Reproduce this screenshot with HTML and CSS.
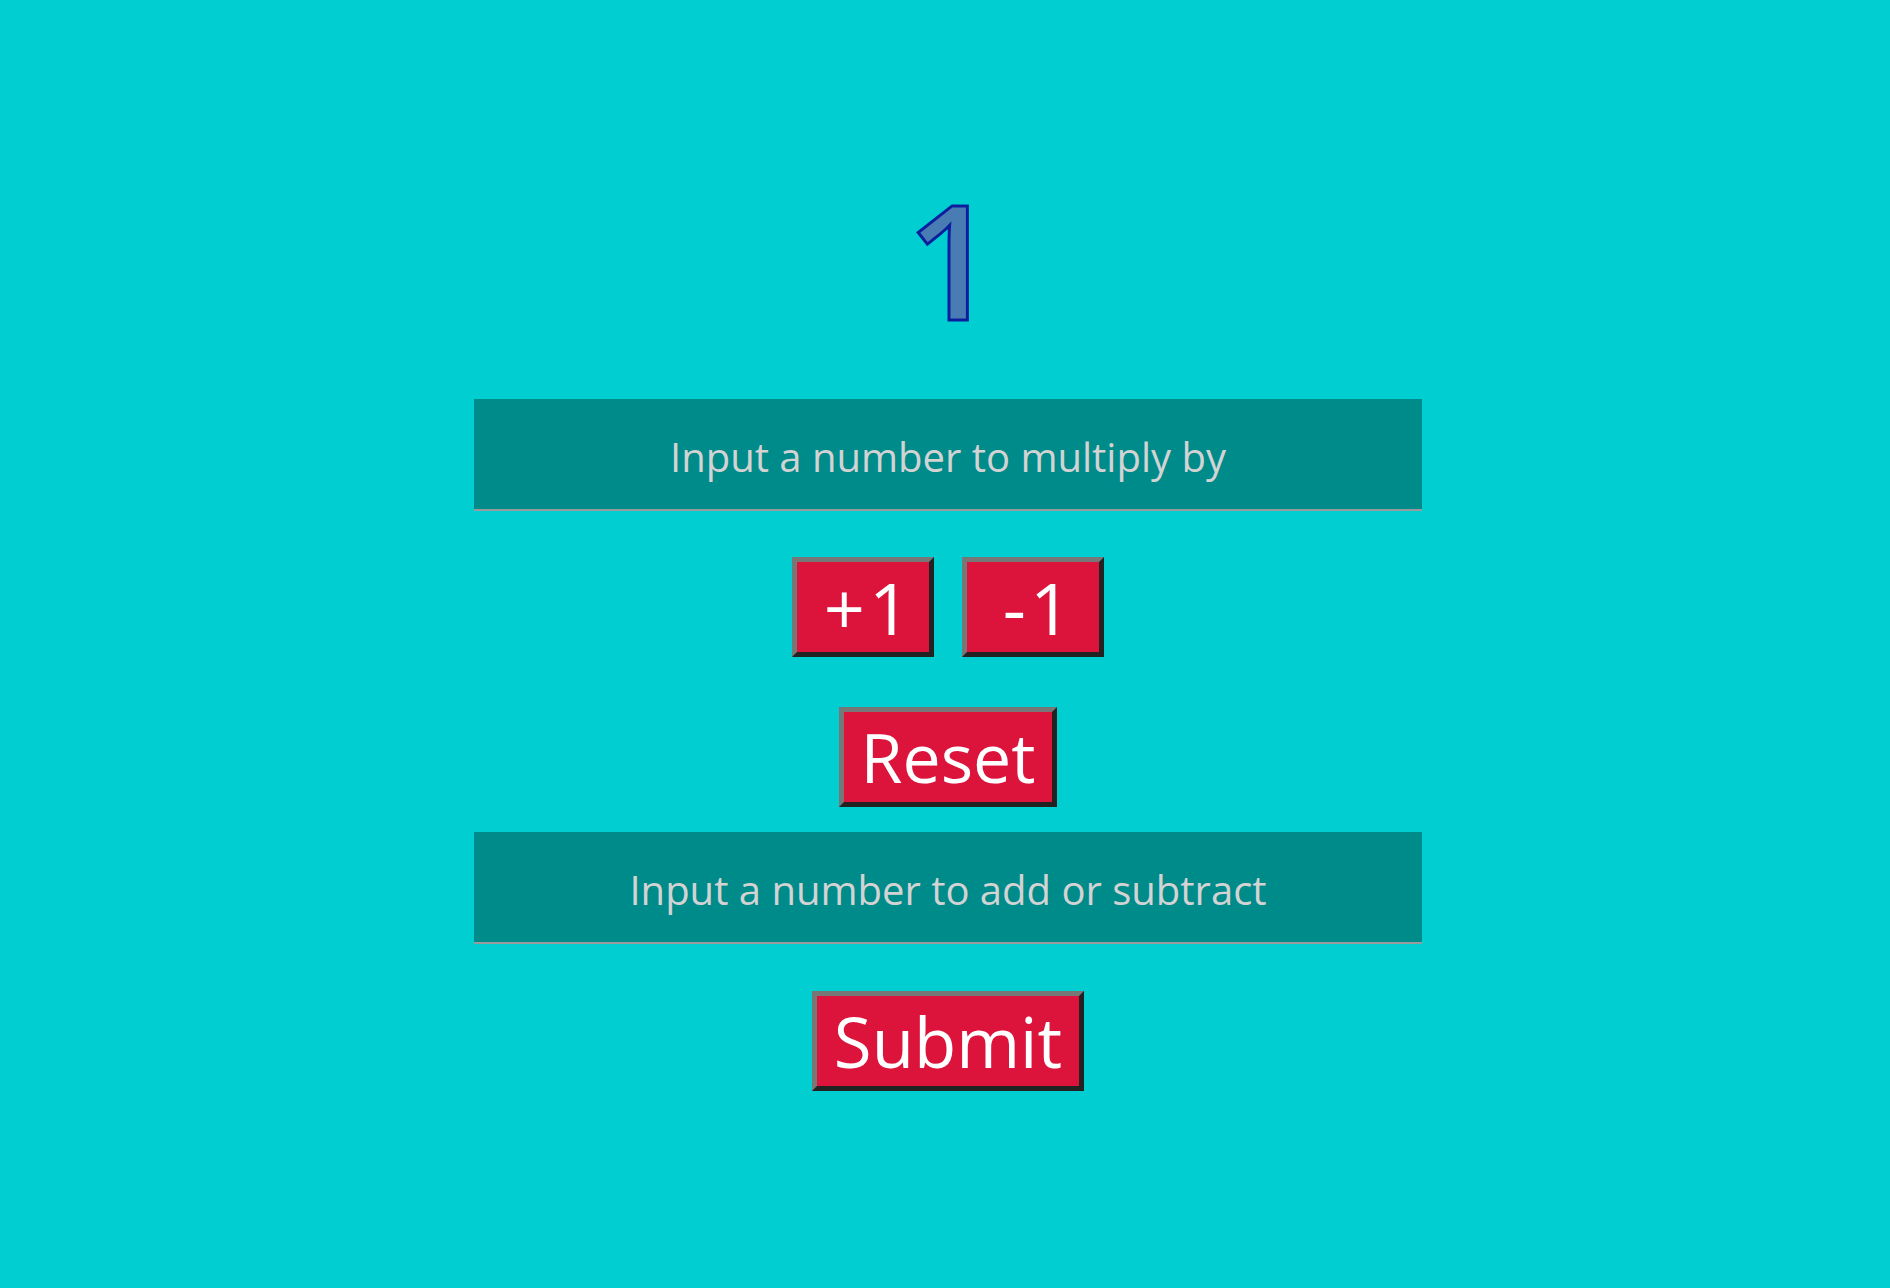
FILE: index.html
```html
<!DOCTYPE html>
<html>
<head>
<meta charset="utf-8">
<link rel="stylesheet" href="styles.css">
</head>
<body>
<main class="app">
  <h1 class="count">1</h1>
  <input class="field field-mult" type="text" placeholder="Input a number to multiply by">
  <div class="step-row">
    <button class="btn btn-step">+1</button>
    <button class="btn btn-step">-1</button>
  </div>
  <button class="btn btn-reset">Reset</button>
  <input class="field field-add" type="text" placeholder="Input a number to add or subtract">
  <button class="btn btn-submit">Submit</button>
</main>
</body>
</html>
```
FILE: styles.css
```css
html, body {
  margin: 0;
  padding: 0;
  background: #00ced1;
  height: 100%;
}
.app {
  display: flex;
  flex-direction: column;
  align-items: center;
  padding-left: 6px;
  font-family: "Open Sans", "Noto Sans", sans-serif;
}
.count {
  margin: 178px 0 0 0;
  padding-left: 8px;
  font-size: 160px;
  line-height: 160px;
  font-weight: 600;
  color: #4a7cb4;
  -webkit-text-stroke: 3px #0b1f9e;
}
.field {
  box-sizing: border-box;
  width: 948px;
  height: 112px;
  margin: 61px 0 0 0;
  background: #008b8b;
  border: none;
  border-bottom: 2px solid #9a9a9a;
  outline: none;
  text-align: center;
  font-family: "Open Sans", "Noto Sans", sans-serif;
  font-size: 40px;
  color: #d3d3d3;
  padding: 4px 0 0 0;
}
.field::placeholder {
  color: #d3d3d3;
}
.field-add {
  margin-top: 25px;
}
.step-row {
  display: flex;
  gap: 28px;
  margin-top: 46px;
}
.btn {
  box-sizing: border-box;
  height: 100px;
  background: #dc143c;
  color: #ffffff;
  border: 5px solid;
  border-color: #777777 #222222 #222222 #777777;
  font-family: "Open Sans", "Noto Sans", sans-serif;
  font-size: 68px;
  line-height: 1;
  padding: 0;
  cursor: pointer;
}
.btn-step {
  width: 142px;
  font-size: 72px;
  letter-spacing: 4px;
  padding-left: 12px;
}
.btn-reset {
  margin-top: 50px;
  width: 218px;
}
.btn-submit {
  margin-top: 47px;
  width: 272px;
  font-size: 69px;
}
```
